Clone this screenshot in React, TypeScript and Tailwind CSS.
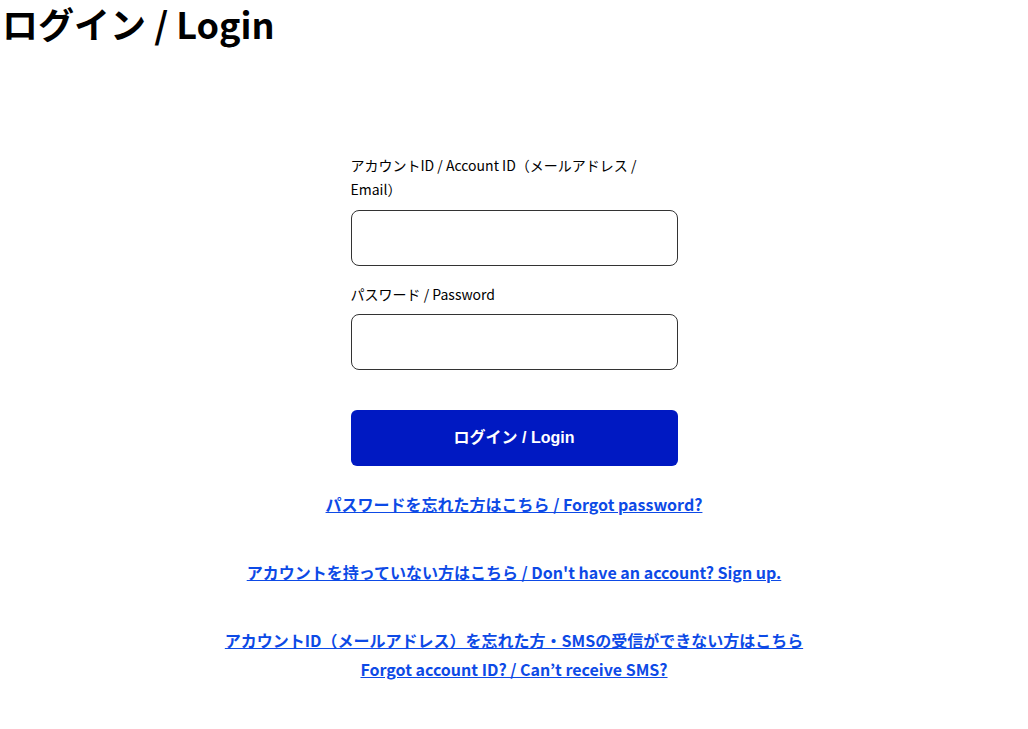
import React from "react";

const jp = "font-['Noto_Sans_CJK_JP','Noto_Sans',sans-serif]";

export default function App() {
  return (
    <div className={`min-h-screen bg-white text-black ${jp}`}>
      <h1 className="m-0 text-[36px] font-bold leading-[46px] pl-[2px]">
        ログイン / Login
      </h1>

      <div className="mx-auto mt-[107px] w-[327px]">
        <label className="block text-[14px] leading-[24px]">
          アカウントID / Account ID（メールアドレス / Email）
        </label>
        <input
          type="text"
          className="mt-[9px] block h-[56px] w-full rounded-[8px] border border-[#333] px-3 outline-none"
        />

        <label className="mt-[16px] block text-[14px] leading-[24px]">
          パスワード / Password
        </label>
        <input
          type="password"
          className="mt-[8px] block h-[56px] w-full rounded-[8px] border border-[#333] px-3 outline-none"
        />

        <button
          type="button"
          className="mt-[40px] flex h-[56px] w-full items-center justify-center rounded-[6px] bg-[#0019c2] text-[16px] font-bold text-white font-['Liberation_Sans','Noto_Sans_CJK_JP',sans-serif]"
        >
          ログイン / Login
        </button>
      </div>

      <div className="flex flex-col items-center text-center text-[16px] font-bold text-[#0d4ae6]">
        <a href="#" className="mt-[24px] underline leading-[29px]">
          パスワードを忘れた方はこちら / Forgot password?
        </a>
        <a href="#" className="mt-[39px] underline leading-[29px]">
          アカウントを持っていない方はこちら / Don't have an account? Sign up.
        </a>
        <a href="#" className="mt-[39px] underline leading-[29px]">
          アカウントID（メールアドレス）を忘れた方・SMSの受信ができない方はこちら
          <br />
          Forgot account ID? / Can’t receive SMS?
        </a>
      </div>
    </div>
  );
}
